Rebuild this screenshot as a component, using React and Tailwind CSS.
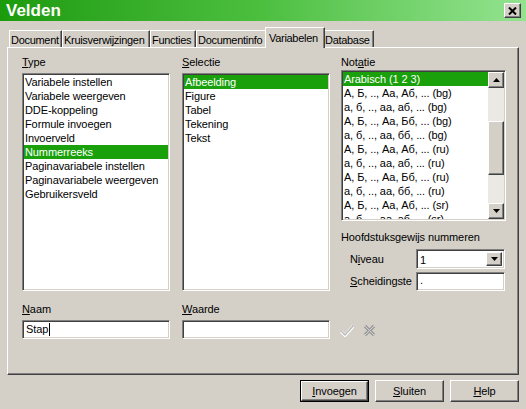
import React from "react";

const SUNKEN =
  "border border-t-[#808080] border-l-[#808080] border-r-white border-b-white shadow-[inset_1px_1px_0_#404040,inset_-1px_-1px_0_#d4d0c8]";
const RAISED =
  "border border-t-white border-l-white border-r-[#404040] border-b-[#404040] shadow-[inset_-1px_-1px_0_#808080]";

const TYPES = [
  "Variabele instellen",
  "Variabele weergeven",
  "DDE-koppeling",
  "Formule invoegen",
  "Invoerveld",
  "Nummerreeks",
  "Paginavariabele instellen",
  "Paginavariabele weergeven",
  "Gebruikersveld",
];

const SELECTIE = ["Afbeelding", "Figure", "Tabel", "Tekening", "Tekst"];

const NOTATIE = [
  "Arabisch (1 2 3)",
  "А, Б, .., Аа, Аб, ... (bg)",
  "а, б, .., аа, аб, ... (bg)",
  "А, Б, .., Аа, Бб, ... (bg)",
  "а, б, .., аа, бб, ... (bg)",
  "А, Б, .., Аа, Аб, ... (ru)",
  "а, б, .., аа, аб, ... (ru)",
  "А, Б, .., Аа, Бб, ... (ru)",
  "а, б, .., аа, бб, ... (ru)",
  "А, Б, .., Аа, Аб, ... (sr)",
  "а, б, .., аа, аб, ... (sr)",
];

const TABS = [
  { label: "Document", w: "w-[53px]" },
  { label: "Kruisverwijzingen", w: "w-[88px]" },
  { label: "Functies", w: "w-[46px]" },
  { label: "Documentinfo", w: "w-[71px]" },
  { label: "Variabelen", w: "w-[60px]", active: true },
  { label: "Database", w: "w-[51px]" },
];

function Label({ pre = "", u, post = "", className = "" }) {
  return (
    <div className={"h-[17px] leading-[13px] whitespace-nowrap " + className}>
      {pre}
      <span className="underline underline-offset-[1px]">{u}</span>
      {post}
    </div>
  );
}

function ListBox({ items, selected, className = "" }) {
  return (
    <div className={"bg-white overflow-hidden p-[1px] " + SUNKEN + " " + className}>
      {items.map((it) => (
        <div
          key={it}
          className={
            "h-[14px] leading-[14px] pl-[1px] whitespace-nowrap " +
            (it === selected ? "bg-[#1aa00b] text-white" : "")
          }
        >
          {it}
        </div>
      ))}
    </div>
  );
}

function Arrow({ up }) {
  return (
    <svg width="7" height="4" viewBox="0 0 7 4">
      <path d={up ? "M3.5 0 L7 4 L0 4 Z" : "M0 0 L7 0 L3.5 4 Z"} fill="#000" />
    </svg>
  );
}

function Button({ children, def }) {
  return (
    <div className={"w-[69px] h-[22px] " + (def ? "border border-black" : "")}>
      <div className={"w-full h-full flex items-center justify-center bg-[#d4d0c8] " + RAISED}>
        {children}
      </div>
    </div>
  );
}

export default function App() {
  return (
    <div className="w-[526px] h-[409px] bg-[#d4d0c8] flex flex-col overflow-hidden text-[11px] leading-[13px] tracking-[-0.1px] text-black font-['Liberation_Sans',Tahoma,Arial,sans-serif]">
      {/* title bar */}
      <div className="h-[21px] flex items-center justify-between pl-[6px] pr-[5px] bg-linear-to-r from-[#1b9b0b] via-[#4cbf3f] to-[#93e38f]">
        <span className="text-[17px] leading-[20px] font-bold text-white tracking-normal">Velden</span>
        <div className={"w-[17px] h-[15px] bg-[#d4d0c8] flex items-center justify-center " + RAISED}>
          <svg width="9" height="8" viewBox="0 0 9 8">
            <path d="M1 0.5 L8 7.5 M8 0.5 L1 7.5" stroke="#000" strokeWidth="2" />
          </svg>
        </div>
      </div>

      {/* tabs */}
      <div className="mt-[6px] h-[20px] pl-[9px] flex items-end tracking-[-0.3px]">
        {TABS.map((t) =>
          t.active ? (
            <div
              key={t.label}
              className={
                "relative z-10 -mx-[2px] -mb-px h-[21px] bg-[#d4d0c8] border-t border-l border-white border-r border-r-[#404040] shadow-[inset_-1px_0_0_#808080] pt-[4px] pl-[3px] whitespace-nowrap " +
                t.w
              }
            >
              {t.label}
            </div>
          ) : (
            <div
              key={t.label}
              className={
                "h-[17px] border-t border-l border-white border-r border-r-[#404040] shadow-[inset_-1px_0_0_#808080] pt-[3px] pl-[1px] whitespace-nowrap overflow-hidden " +
                t.w
              }
            >
              {t.label}
            </div>
          )
        )}
      </div>

      {/* tab panel */}
      <div className="mx-[7px] h-[328px] border border-t-white border-l-white border-r-[#404040] border-b-[#404040] shadow-[inset_-1px_-1px_0_#808080] pl-[14px] pt-[8px]">
        <div className="flex h-[235px]">
          <div className="w-[148px] flex flex-col">
            <Label u="T" post="ype" />
            <ListBox items={TYPES} selected="Nummerreeks" className="h-[218px]" />
          </div>
          <div className="w-[148px] ml-[12px] flex flex-col">
            <Label u="S" post="electie" />
            <ListBox items={SELECTIE} selected="Afbeelding" className="h-[218px]" />
          </div>
          <div className="w-[165px] ml-[11px] flex flex-col">
            <Label pre="Not" u="a" post="tie" />
            <div className={"h-[151px] bg-white flex p-[1px] " + SUNKEN}>
              <div className="flex-1 overflow-hidden">
                {NOTATIE.map((it, i) => (
                  <div
                    key={it + i}
                    className={
                      "h-[14px] leading-[14px] pl-[1px] whitespace-nowrap " +
                      (i === 0 ? "bg-[#1aa00b] text-white" : "")
                    }
                  >
                    {it}
                  </div>
                ))}
              </div>
              <div className="w-[16px] flex flex-col bg-[#ebe9e4]">
                <div className={"h-[16px] bg-[#d4d0c8] flex items-center justify-center " + RAISED}>
                  <Arrow up />
                </div>
                <div className="flex-1">
                  <div className={"mt-[33px] h-[54px] bg-[#d4d0c8] " + RAISED} />
                </div>
                <div className={"h-[16px] bg-[#d4d0c8] flex items-center justify-center " + RAISED}>
                  <Arrow />
                </div>
              </div>
            </div>
            <div className="mt-[10px] h-[13px] whitespace-nowrap">Hoofdstuksgewijs nummeren</div>
            <div className="mt-[5px] flex items-center">
              <Label pre="N" u="i" post="veau" className="w-[75px] pl-[9px] h-auto" />
              <div className={"w-[89px] h-[20px] bg-white flex p-[2px] " + SUNKEN}>
                <div className="flex-1 pl-[1px] leading-[16px]">1</div>
                <div className={"w-[16px] bg-[#d4d0c8] flex items-center justify-center " + RAISED}>
                  <Arrow />
                </div>
              </div>
            </div>
            <div className="mt-[3px] flex items-center">
              <Label u="S" post="cheidingste" className="w-[75px] pl-[9px] h-auto" />
              <div className={"w-[89px] h-[19px] bg-white pl-[3px] leading-[15px] " + SUNKEN}>.</div>
            </div>
          </div>
        </div>

        <div className="mt-[12px] flex">
          <div className="w-[148px] flex flex-col">
            <Label u="N" post="aam" />
            <div className={"h-[19px] bg-white pl-[3px] flex items-center " + SUNKEN}>
              <span className="border-r border-black pr-[1px] leading-[13px]">Stap</span>
            </div>
          </div>
          <div className="w-[148px] ml-[12px] flex flex-col">
            <Label u="W" post="aarde" />
            <div className={"h-[19px] bg-white " + SUNKEN} />
          </div>
          <div className="ml-[10px] self-end mb-[2px] flex items-center gap-[9px]">
            <svg width="14" height="12" viewBox="0 0 14 12">
              <path d="M1 6.5 L5 10.5 L13 1.5" fill="none" stroke="#ffffff" strokeWidth="3" />
              <path d="M1 6 L5 10 L13 1" fill="none" stroke="#b8b8b8" strokeWidth="1.4" />
            </svg>
            <svg width="13" height="13" viewBox="0 0 13 13">
              <path d="M2 2 L11 11 M11 2 L2 11" stroke="#9c9c9c" strokeWidth="3.2" />
              <path d="M2 2 L11 11 M11 2 L2 11" stroke="#d0d0d0" strokeWidth="1" />
            </svg>
          </div>
        </div>
      </div>

      {/* buttons */}
      <div className="mt-[5px] flex justify-end pr-[7px] gap-[6px]">
        <Button def>
          <Label u="I" post="nvoegen" className="h-auto" />
        </Button>
        <Button>
          <Label u="S" post="luiten" className="h-auto" />
        </Button>
        <Button>
          <Label u="H" post="elp" className="h-auto" />
        </Button>
      </div>
    </div>
  );
}
